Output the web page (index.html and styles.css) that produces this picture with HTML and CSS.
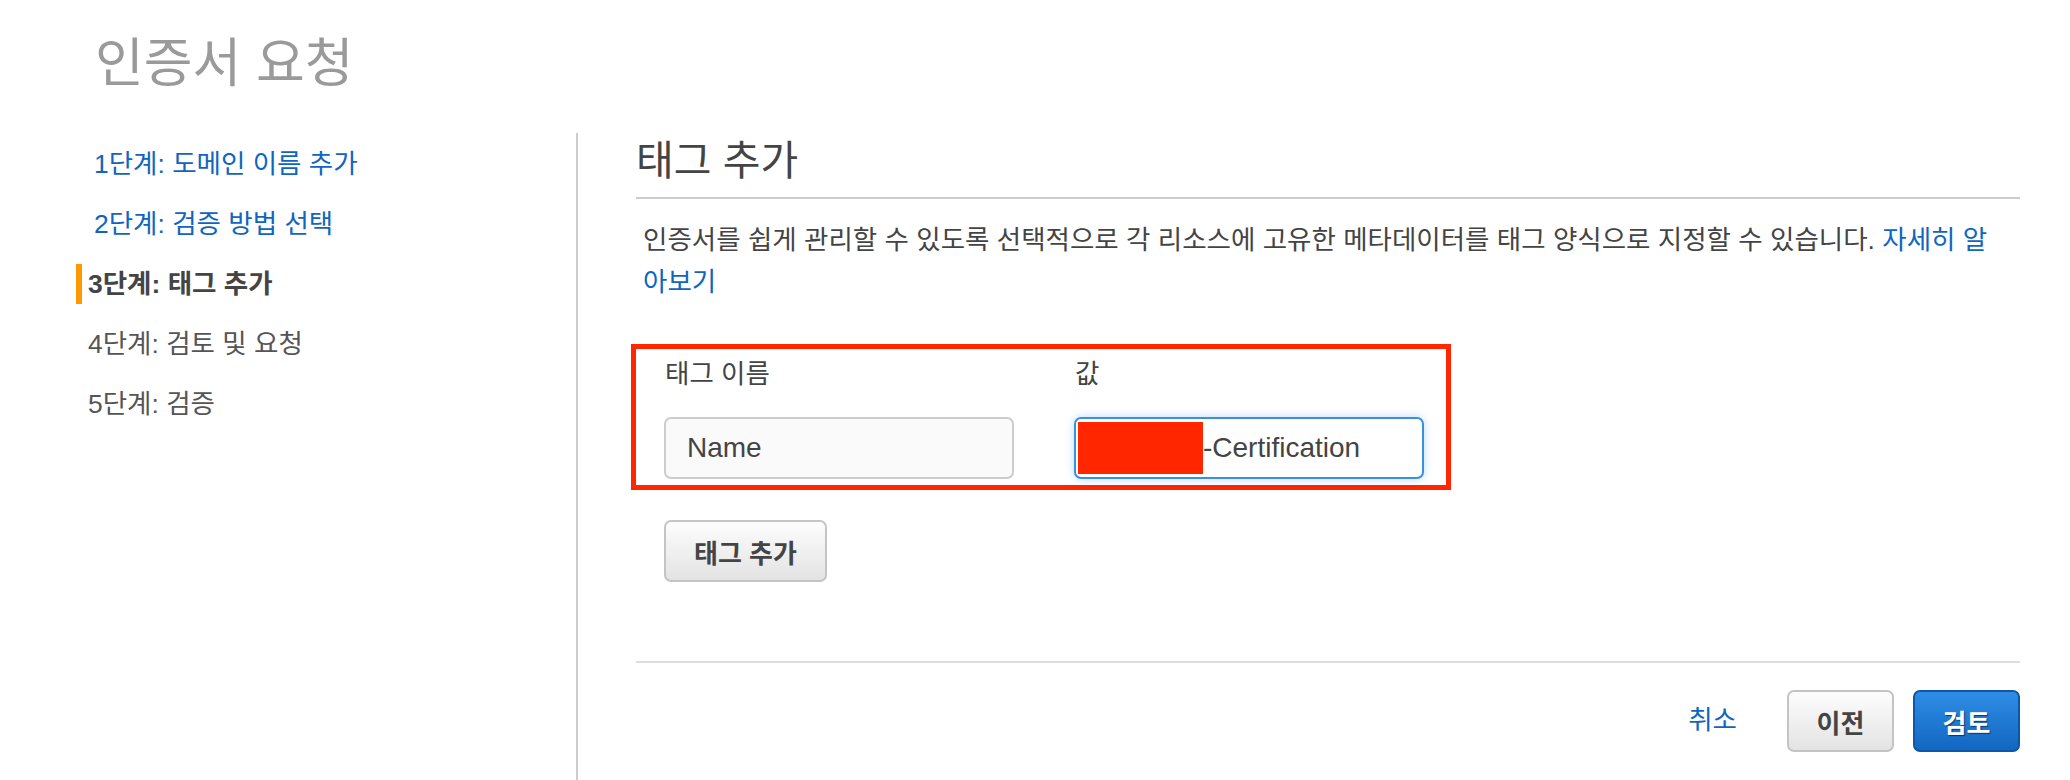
FILE: index.html
```html
<!DOCTYPE html>
<html lang="ko">
<head>
<meta charset="utf-8">
<title>인증서 요청</title>
<link rel="stylesheet" href="styles.css">
</head>
<body>
<div class="page">
  <h1 class="page-title">인증서 요청</h1>
  <div class="columns">
    <nav class="steps">
      <a class="step step-link" href="#">1단계: 도메인 이름 추가</a>
      <a class="step step-link" href="#">2단계: 검증 방법 선택</a>
      <div class="step step-active">3단계: 태그 추가</div>
      <div class="step">4단계: 검토 및 요청</div>
      <div class="step">5단계: 검증</div>
    </nav>
    <main class="content">
      <h2 class="section-title">태그 추가</h2>
      <p class="intro">인증서를 쉽게 관리할 수 있도록 선택적으로 각 리소스에 고유한 메타데이터를 태그 양식으로 지정할 수 있습니다. <a class="link" href="#"><span>자세히 알</span><span>아보기</span></a></p>
      <div class="tag-table">
        <div class="tag-col">
          <div class="tag-label">태그 이름</div>
          <div class="field">Name</div>
        </div>
        <div class="tag-col">
          <div class="tag-label">값</div>
          <div class="field field-focus"><span class="redact"></span>-Certification</div>
        </div>
      </div>
      <button class="btn btn-add" type="button">태그 추가</button>
      <div class="footer">
        <a class="cancel" href="#">취소</a>
        <button class="btn btn-gray" type="button">이전</button>
        <button class="btn btn-primary" type="button">검토</button>
      </div>
    </main>
  </div>
</div>
</body>
</html>
```
FILE: styles.css
```css
html, body {
  margin: 0;
  padding: 0;
  background: #ffffff;
}

body {
  font-family: "Liberation Sans", "Noto Sans CJK KR", sans-serif;
  color: #444444;
  width: 2070px;
  height: 780px;
  overflow: hidden;
}

.page {
  padding-top: 37px;
}

.page-title {
  margin: 0 0 43px 95px;
  font-size: 53px;
  line-height: 53px;
  font-weight: normal;
  color: #9a9a9a;
}

.columns {
  display: flex;
  height: 647px;
}

.steps {
  box-sizing: border-box;
  width: 578px;
  flex: none;
  border-right: 2px solid #cccccc;
  padding: 11px 0 0 76px;
  display: flex;
  flex-direction: column;
  gap: 20px;
}

.step {
  display: block;
  height: 40px;
  line-height: 40px;
  font-size: 26.5px;
  padding-left: 12px;
  color: #555555;
  text-decoration: none;
}

.step-link {
  padding-left: 18px;
  color: #0f65bf;
}

.step-active {
  padding-left: 6px;
  border-left: 6px solid #ff9900;
  font-weight: bold;
  color: #444444;
}

.content {
  flex: 1;
  padding: 4px 50px 0 58px;
}

.section-title {
  margin: 0;
  font-size: 41px;
  line-height: 49px;
  font-weight: normal;
  color: #444444;
  padding-bottom: 11px;
  border-bottom: 2px solid #cccccc;
}

.intro {
  margin: 20px 0 0 0;
  padding: 0 12px 0 7px;
  font-size: 26.5px;
  line-height: 42px;
  color: #444444;
}

.link {
  color: #0f65bf;
  text-decoration: none;
}

.tag-table {
  margin: 41px 0 0 -5px;
  width: 820px;
  box-sizing: border-box;
  border: 5px solid #ff2600;
  padding: 12px 0 6px 28px;
  display: flex;
  gap: 60px;
}

.tag-col {
  width: 350px;
}

.tag-label {
  font-size: 26.5px;
  line-height: 26px;
  margin: 0 0 30px 1px;
  color: #444444;
}

.field {
  box-sizing: border-box;
  height: 62px;
  border: 2px solid #cccccc;
  border-radius: 7px;
  background: #fafafa;
  padding-left: 21px;
  font-size: 28px;
  line-height: 58px;
  color: #444444;
  white-space: nowrap;
  overflow: hidden;
}

.field-focus {
  border-color: #3b8fe0;
  background: #ffffff;
  padding-left: 2px;
  box-shadow: 0 0 8px rgba(59, 143, 224, 0.35);
}

.redact {
  display: inline-block;
  width: 125px;
  height: 52px;
  background: #ff2600;
  vertical-align: middle;
  margin-top: -3px;
}

.btn {
  box-sizing: border-box;
  height: 62px;
  border-radius: 7px;
  font-family: "Liberation Sans", "Noto Sans CJK KR", sans-serif;
  font-size: 26px;
  font-weight: bold;
  cursor: pointer;
  padding: 0;
}

.btn-add,
.btn-gray {
  border: 2px solid #c4c4c4;
  background: linear-gradient(#fdfdfd, #e3e3e3);
  color: #444444;
}

.btn-add {
  display: block;
  margin: 30px 0 0 28px;
  width: 163px;
}

.footer {
  margin-top: 79px;
  border-top: 2px solid #dddddd;
  padding-top: 27px;
  display: flex;
  justify-content: flex-end;
  align-items: center;
}

.cancel {
  font-size: 26.5px;
  color: #0f65bf;
  text-decoration: none;
  margin-right: 50px;
  margin-top: -8px;
}

.btn-gray {
  width: 107px;
  margin-right: 19px;
}

.btn-primary {
  width: 107px;
  border: 2px solid #0d58a6;
  background: linear-gradient(#2f8de6, #1167c1);
  color: #ffffff;
  text-shadow: 1px 1px 1px rgba(0, 0, 0, 0.55);
}
```
